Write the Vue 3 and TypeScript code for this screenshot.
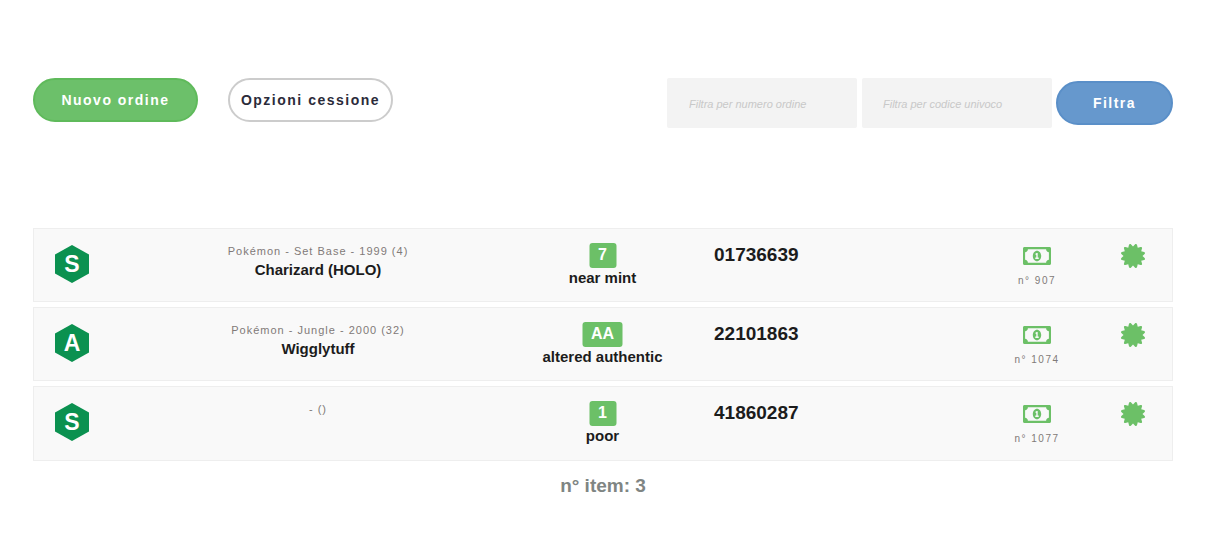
<script setup lang="ts">
const items = [
  { letter: 'S', set: 'Pokémon - Set Base - 1999 (4)', name: 'Charizard (HOLO)', grade: '7', label: 'near mint', code: '01736639', no: 'n° 907' },
  { letter: 'A', set: 'Pokémon - Jungle - 2000 (32)', name: 'Wigglytuff', grade: 'AA', label: 'altered authentic', code: '22101863', no: 'n° 1074' },
  { letter: 'S', set: '- ()', name: '', grade: '1', label: 'poor', code: '41860287', no: 'n° 1077' },
]
const billPath = 'M320 144c-53.02 0-96 50.14-96 112 0 61.85 42.98 112 96 112 53 0 96-50.13 96-112 0-61.86-42.98-112-96-112zm40 168c0 4.42-3.58 8-8 8h-64c-4.42 0-8-3.58-8-8v-16c0-4.42 3.58-8 8-8h16v-55.44l-.47.31a7.992 7.992 0 0 1-11.09-2.22l-8.88-13.31a7.992 7.992 0 0 1 2.22-11.09l15.33-10.22a23.99 23.99 0 0 1 13.31-4.03H328c4.42 0 8 3.58 8 8v88h16c4.42 0 8 3.58 8 8v16zM608 64H32C14.33 64 0 78.33 0 96v320c0 17.67 14.33 32 32 32h576c17.67 0 32-14.33 32-32V96c0-17.67-14.33-32-32-32zm-16 272c-35.35 0-64 28.65-64 64H112c0-35.35-28.65-64-64-64V176c35.35 0 64-28.65 64-64h416c0 35.35 28.65 64 64 64v160z'
const sealPath = 'M458.622 255.92l45.985-45.005c13.708-12.977 7.316-36.039-10.664-40.339l-62.65-15.99 17.661-62.015c4.991-17.838-11.829-34.663-29.661-29.671l-61.994 17.667-15.984-62.671C337.085.197 313.765-6.276 300.99 7.228L256 53.57 211.011 7.229c-12.63-13.351-36.047-7.234-40.325 10.668l-15.984 62.671-61.995-17.667C74.87 57.907 58.056 74.738 63.046 92.572l17.661 62.015-62.65 15.99C.069 174.878-6.31 197.944 7.392 210.915l45.985 45.005-45.985 45.004c-13.708 12.977-7.316 36.039 10.664 40.339l62.65 15.99-17.661 62.015c-4.991 17.838 11.829 34.663 29.661 29.671l61.994-17.667 15.984 62.671c4.439 18.575 27.696 24.018 40.325 10.668L256 458.61l44.989 46.001c12.5 13.488 35.987 7.486 40.325-10.668l15.984-62.671 61.994 17.667c17.83 4.992 34.653-11.836 29.661-29.671l-17.661-62.015 62.65-15.99c17.987-4.302 24.366-27.367 10.664-40.339l-45.984-45.004z'
</script>

<template>
  <main class="page">
    <section class="toolbar">
      <div class="actions">
        <button class="btn green">Nuovo ordine</button>
        <button class="btn outline">Opzioni cessione</button>
      </div>
      <div class="filters">
        <input class="field" placeholder="Filtra per numero ordine" />
        <input class="field second" placeholder="Filtra per codice univoco" />
        <button class="btn blue">Filtra</button>
      </div>
    </section>
    <section class="list">
      <article v-for="item in items" :key="item.code" class="row">
        <div class="badge-cell">
          <span class="hex">
            <svg viewBox="0 0 34 38" width="34" height="38"><polygon points="17,0 34,9.5 34,28.5 17,38 0,28.5 0,9.5" fill="#0b9150" /></svg>
            <b>{{ item.letter }}</b>
          </span>
        </div>
        <div class="card">
          <div class="set">{{ item.set }}</div>
          <div class="name">{{ item.name }}</div>
        </div>
        <div class="grade">
          <span class="pill">{{ item.grade }}</span>
          <span class="label">{{ item.label }}</span>
        </div>
        <div class="code">{{ item.code }}</div>
        <div class="money">
          <svg viewBox="0 64 640 384" width="28" height="18" preserveAspectRatio="none">
            <path fill="#6cc067" :d="billPath" />
          </svg>
          <span class="no">{{ item.no }}</span>
        </div>
        <div class="seal">
          <svg viewBox="0 0 512 512" width="24" height="24"><path fill="#6cc067" :d="sealPath" /></svg>
        </div>
      </article>
    </section>
    <div class="count">n° item: 3</div>
  </main>
</template>

<style>
html, body { margin: 0; background: #fff; }
</style>

<style scoped>
.page {
  box-sizing: border-box;
  width: 1217px;
  height: 545px;
  padding: 78px 44px 0 33px;
  font-family: "Liberation Sans", Arial, sans-serif;
  overflow: hidden;
}
.toolbar {
  display: flex;
  justify-content: space-between;
  align-items: flex-start;
  height: 150px;
}
.actions { display: flex; gap: 30px; }
.btn {
  box-sizing: border-box;
  height: 44px;
  border-radius: 22px;
  border: 2px solid transparent;
  font: bold 14px "Liberation Sans", Arial, sans-serif;
  letter-spacing: 1.5px;
  padding: 0;
}
.green { width: 165px; background: #6cc06a; border-color: #5fba5b; color: #fff; }
.outline { width: 165px; background: #fff; border-color: #ccc; color: #2b2b3a; }
.blue { width: 117px; margin-top: 3px; margin-left: -1px; background: #6698cd; border-color: #5a8fc8; color: #fff; }
.filters { display: flex; gap: 5px; }
.field {
  box-sizing: border-box;
  width: 190px;
  height: 50px;
  border: 0;
  border-radius: 2px;
  background: #f3f3f3;
  padding: 2px 22px 0;
  font: italic 11px "Liberation Sans", Arial, sans-serif;
  outline: none;
}
.field.second { padding-left: 21px; }
.field::placeholder { color: #c8c8c8; opacity: 1; }
.list { display: flex; flex-direction: column; gap: 5px; }
.row {
  box-sizing: border-box;
  height: 74px;
  background: #f9f9f9;
  border: 1px solid #eee;
  display: grid;
  grid-template-columns: 74px 420px 150px 275px 168px 1fr;
  color: #1c1c1c;
}
.row:last-child { height: 75px; }
.badge-cell { padding: 16px 0 0 21px; }
.hex { position: relative; display: block; width: 34px; height: 38px; }
.hex svg { display: block; }
.hex b {
  position: absolute;
  inset: 0;
  display: flex;
  align-items: center;
  justify-content: center;
  color: #fff;
  font-size: 23px;
}
.card { text-align: center; padding-top: 16px; }
.set { font-size: 11px; letter-spacing: 1px; line-height: 13px; color: #817a78; }
.name { font-size: 15px; font-weight: bold; line-height: 16px; margin-top: 4px; }
.grade { display: flex; flex-direction: column; align-items: center; padding-top: 14px; transform: translateX(-0.5px); }
.pill {
  background: #6cc067;
  color: #fff;
  border-radius: 3px;
  height: 25px;
  line-height: 23px;
  min-width: 27px;
  text-align: center;
  box-sizing: border-box;
  padding: 0 8px;
  font-size: 16px;
  font-weight: bold;
}
.label { font-size: 15px; font-weight: bold; line-height: 16px; margin-top: 2px; }
.code { font-size: 19px; font-weight: bold; line-height: 20px; padding: 16px 0 0 36px; }
.money { display: flex; flex-direction: column; align-items: center; padding-top: 18px; }
.money svg { display: block; }
.no { font-size: 10px; letter-spacing: 1.5px; line-height: 12px; margin-top: 10px; color: #817a78; }
.seal { padding-top: 15px; }
.seal svg { display: block; }
.count {
  text-align: center;
  font-size: 19px;
  font-weight: bold;
  color: #7f8583;
  margin-top: 14px;
  line-height: 21px;
}
</style>
